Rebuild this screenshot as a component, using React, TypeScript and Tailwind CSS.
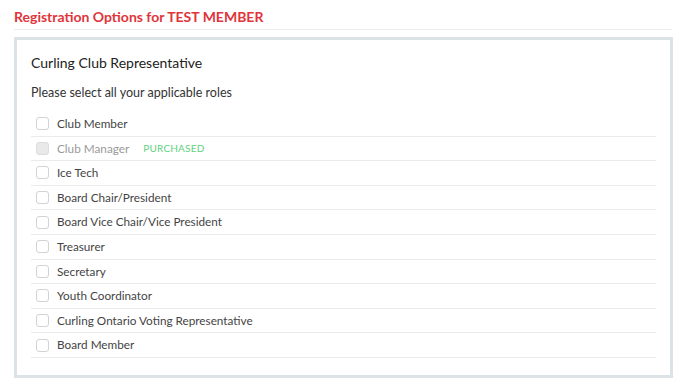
import React from "react";

const roles = [
  { label: "Club Member" },
  { label: "Club Manager", purchased: true },
  { label: "Ice Tech" },
  { label: "Board Chair/President" },
  { label: "Board Vice Chair/Vice President" },
  { label: "Treasurer" },
  { label: "Secretary" },
  { label: "Youth Coordinator" },
  { label: "Curling Ontario Voting Representative" },
  { label: "Board Member" },
];

export default function App() {
  return (
    <div
      className="w-[688px] h-[388px] bg-white overflow-hidden"
      style={{ fontFamily: "Lato, 'Noto Sans', sans-serif" }}
    >
      <div className="pl-[14px] pr-[16px]">
        <div className="h-[30px] pt-[8px] border-b border-[#ececec]">
          <h1 className="text-[14px] font-bold text-[#e0353b] leading-[18px]">
            Registration Options for TEST MEMBER
          </h1>
        </div>
      </div>
      <div className="mx-[14px] mt-[7px] w-[659px] h-[341px] border-[3px] border-[#dce3e6] px-[14px]">
        <div className="pt-[13px] text-[14px] text-[#222] leading-[20px]">
          Curling Club Representative
        </div>
        <div className="mt-[10px] text-[12.5px] text-[#333] leading-[20px]">
          Please select all your applicable roles
        </div>
        <div className="mt-[9px]">
          {roles.map((r) => (
            <div
              key={r.label}
              className="h-[24.6px] flex items-center border-b border-[#ebebeb] pl-[5px]"
            >
              <span
                className={
                  r.purchased
                    ? "w-[13px] h-[13px] shrink-0 rounded-[3px] border border-[#dcdcdc] bg-[#e9e9e9]"
                    : "w-[13px] h-[13px] shrink-0 rounded-[3px] border border-[#d3d3d3] bg-white"
                }
              />
              <span
                className={
                  r.purchased
                    ? "ml-[8px] text-[11.75px] text-[#9a9a9a]"
                    : "ml-[8px] text-[11.75px] text-[#444]"
                }
              >
                {r.label}
              </span>
              {r.purchased && (
                <span className="ml-[14px] text-[10px] tracking-[0.2px] text-[#5fd17f]">
                  PURCHASED
                </span>
              )}
            </div>
          ))}
        </div>
      </div>
    </div>
  );
}
